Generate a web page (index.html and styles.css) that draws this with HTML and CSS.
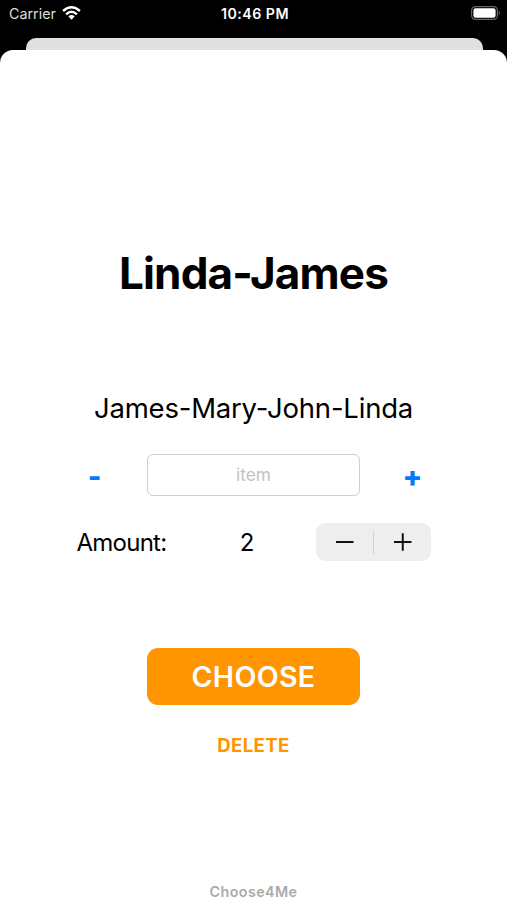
FILE: index.html
```html
<!DOCTYPE html>
<html lang="en">
<head>
<meta charset="utf-8">
<title>Choose4Me</title>
<link rel="stylesheet" href="styles.css">
</head>
<body>
<header class="status">
  <div class="carrier"><span class="carrier-name">Carrier</span>
    <svg class="wifi" viewBox="0 0 19 14" width="19" height="14"><g fill="none" stroke="#fff" stroke-width="2.4"><path d="M1.1 5Q9.5-2.4 17.9 5"/><path d="M4.1 8.3Q9.5 3.4 14.9 8.3"/></g><path d="M9.5 13.7L6.3 10.3Q9.5 7.6 12.7 10.3Z" fill="#fff"/></svg>
  </div>
  <time class="clock">10:46 PM</time>
  <svg class="battery" viewBox="0 0 30 14" width="30" height="14"><rect x=".6" y=".6" width="25.8" height="12.8" rx="3.8" fill="none" stroke="#666" stroke-width="1.2"/><rect x="2.4" y="2.2" width="22.2" height="9.6" rx="2.2" fill="#fff"/><path d="M27.8 4.8q2.4 2.2 0 4.4z" fill="#666"/></svg>
</header>
<div class="back-card"></div>
<main class="sheet">
  <h1 class="result">Linda-James</h1>
  <p class="names">James-Mary-John-Linda</p>
  <div class="item-row">
    <button class="sign minus">-</button>
    <input class="item" placeholder="item">
    <button class="sign plus">+</button>
  </div>
  <div class="amount-row">
    <span class="label">Amount:</span>
    <span class="value">2</span>
    <div class="stepper">
      <svg class="half" viewBox="0 0 57 38"><path d="M20 19H37.5"/></svg>
      <i class="divider"></i>
      <svg class="half" viewBox="0 0 57 38"><path d="M20 19H37.5M28.75 10.2V27.8"/></svg>
    </div>
  </div>
  <button class="choose">CHOOSE</button>
  <button class="delete">DELETE</button>
  <footer class="brand">Choose4Me</footer>
</main>
</body>
</html>
```
FILE: styles.css
```css
* { box-sizing: border-box; }
body { margin: 0; height: 900px; display: flex; flex-direction: column; background: #000; font-family: Inter, sans-serif; overflow: hidden; }
button { border: 0; padding: 0; background: none; font: inherit; }
.status { height: 38px; flex: none; padding: 0 6px 11px 9px; display: grid; grid-template-columns: 1fr auto 1fr; align-items: center; color: #fff; font-size: 14.3px; line-height: 18px; }
.carrier { display: flex; align-items: center; gap: 6px; color: #ddd; }
.wifi { margin-bottom: 1px; }
.clock { font-weight: 600; font-size: 14.2px; letter-spacing: .5px; }
.battery { justify-self: end; margin-bottom: 1px; }
.back-card { height: 12px; flex: none; margin: 0 24.5px 0 25.5px; background: #e0e0e0; border-radius: 10px 10px 0 0; }
.sheet { flex: 1; display: flex; flex-direction: column; align-items: center; background: #fff; border-radius: 13px 13px 0 0; color: #000; }
.result { margin: 196px 0 0; font-size: 44px; line-height: 54px; font-weight: 700; letter-spacing: -.85px; white-space: nowrap; }
.names { margin: 90px 0 0; font-size: 27.5px; line-height: 36px; letter-spacing: -.2px; white-space: nowrap; }
.item-row { width: 354px; margin-top: 28px; display: grid; grid-template-columns: 36px 213px 36px; justify-content: space-between; align-items: center; }
.sign { padding-top: 3px; color: #007aff; font-size: 29px; line-height: 38px; font-weight: 800; }
.item { height: 42px; padding: 0 2px 2px; border: 1px solid #cfcfcf; border-radius: 6px; text-align: center; font: 17.3px Inter, sans-serif; outline: 0; background: #fff; }
.item::placeholder { color: #c2c2c2; }
.amount-row { width: 354px; margin-top: 27px; display: grid; grid-template-columns: 102px 1fr 115px; align-items: center; font-size: 24px; line-height: 36px; }
.label { padding-top: 2px; letter-spacing: -.75px; }
.value { padding-top: 2px; text-align: center; }
.stepper { height: 38px; display: flex; align-items: center; background: #eee; border-radius: 9px; }
.half { width: 57px; height: 38px; stroke: #111; stroke-width: 2; fill: none; }
.divider { width: 1px; height: 23px; background: #d2d2d2; }
.choose { width: 213px; height: 57px; margin-top: 87px; border-radius: 11px; background: #ff9500; color: #fff; font-size: 28.5px; font-weight: 600; letter-spacing: .35px; }
.delete { margin-top: 27px; color: #ff9500; font-size: 18.6px; line-height: 26px; font-weight: 700; letter-spacing: .4px; }
.brand { margin-top: 125px; color: #aaa; font-size: 14.3px; line-height: 18px; font-weight: 600; letter-spacing: .4px; }
```
